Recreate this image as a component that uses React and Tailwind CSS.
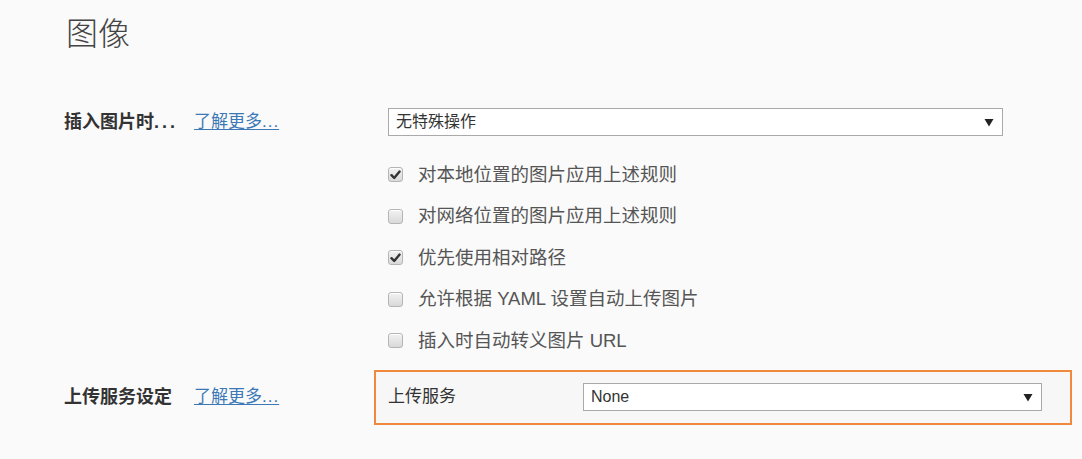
import React from 'react';

const font = { fontFamily: '"Liberation Sans", "Noto Sans CJK SC", sans-serif' };

const Arrow = () => (
  <svg width="10" height="9" viewBox="0 0 10 9" className="shrink-0">
    <path d="M0.5 1 L9.5 1 L5 8.5 Z" fill="#222" />
  </svg>
);

const Select = ({ value, className }) => (
  <div className={`flex items-center justify-between h-[28px] bg-white border border-[#a9a9a9] pl-[7px] pr-[8px] text-[16px] text-[#333] ${className}`}>
    <span className="leading-none">{value}</span>
    <Arrow />
  </div>
);

const Checkbox = ({ checked }) => (
  <div className="w-[15px] h-[15px] rounded-[3px] border border-[#b5b5b5] bg-gradient-to-b from-[#f2f2f2] to-[#d9d9d9] flex items-center justify-center shadow-[inset_0_1px_0_#fff]">
    {checked && (
      <svg width="11" height="10" viewBox="0 0 11 10">
        <path d="M1.5 5.2 L4.2 8 L9.6 1.6" fill="none" stroke="#333" strokeWidth="2.4" strokeLinecap="round" strokeLinejoin="round" />
      </svg>
    )}
  </div>
);

const options = [
  { label: '对本地位置的图片应用上述规则', checked: true },
  { label: '对网络位置的图片应用上述规则', checked: false },
  { label: '优先使用相对路径', checked: true },
  { label: '允许根据 YAML 设置自动上传图片', checked: false },
  { label: '插入时自动转义图片 URL', checked: false },
];

const Label = ({ children, dots, width }) => (
  <div className={`flex items-center shrink-0 ${width}`}>
    <span className="w-[130px] text-[18px] font-bold text-[#333] whitespace-nowrap">
      {children}
      {dots && <span className="tracking-[3px]">...</span>}
    </span>
    <a href="#" className="text-[17px] text-[#3b78b5] underline underline-offset-2 decoration-[#3b78b5]">
      了解更多<span className="tracking-[1px]">...</span>
    </a>
  </div>
);

export default function App() {
  return (
    <div className="min-h-screen w-[1082px] h-[459px] bg-[#fafafa] pl-[64px] pt-[12px] overflow-hidden" style={font}>
      <h1 className="text-[32px] leading-[44px] font-light text-[#444] pl-[2px]">图像</h1>

      {/* 插入图片时 */}
      <div className="flex items-center mt-[52px]">
        <Label width="w-[324px]" dots>插入图片时</Label>
        <Select value="无特殊操作" className="w-[615px]" />
      </div>

      <div className="ml-[324px] mt-[18px] flex flex-col">
        {options.map((o) => (
          <div key={o.label} className="flex items-center h-[41.5px]">
            <Checkbox checked={o.checked} />
            <span className="ml-[15px] text-[18.5px] text-[#555]">{o.label}</span>
          </div>
        ))}
      </div>

      {/* 上传服务设定 */}
      <div className="flex items-center mt-[8px]">
        <Label width="w-[310px]">上传服务设定</Label>
        <div className="flex items-center w-[698px] h-[55px] border-2 border-[#f0883e] bg-[#f7f7f7] pl-[12px]">
          <span className="w-[195px] text-[17px] text-[#333]">上传服务</span>
          <Select value="None" className="w-[459px]" />
        </div>
      </div>
    </div>
  );
}
